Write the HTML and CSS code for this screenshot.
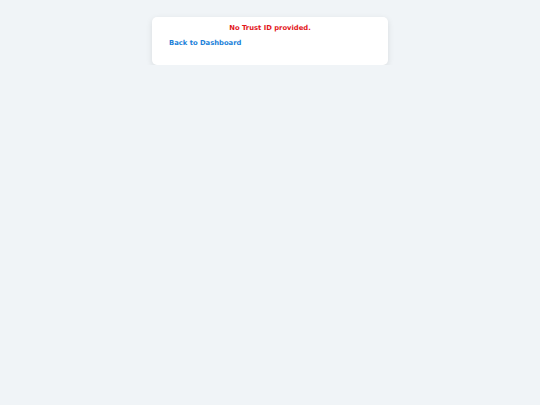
FILE: index.html
```html
<!DOCTYPE html>
<html>
<head>
<meta charset="utf-8">
<link rel="stylesheet" href="styles.css">
</head>
<body>
<div class="card">
  <p class="error">No Trust ID provided.</p>
  <a class="back" href="#">Back to Dashboard</a>
</div>
</body>
</html>
```
FILE: styles.css
```css
html, body {
  margin: 0;
  padding: 0;
}
body {
  background: #f0f4f7;
  font-family: "DejaVu Sans", sans-serif;
  font-size: 6.8px;
  padding-top: 17px;
}
.card {
  width: 236px;
  box-sizing: border-box;
  margin: 0 auto;
  background: #ffffff;
  border-radius: 5px;
  box-shadow: 0 2px 6px rgba(0, 0, 0, 0.1);
  padding: 7px 17px 17px;
  height: 48px;
}
.error {
  margin: 0 0 7px;
  text-align: center;
  color: #e3161b;
  font-weight: bold;
}
.back {
  color: #1a7fd9;
  font-weight: bold;
  text-decoration: none;
}
```
